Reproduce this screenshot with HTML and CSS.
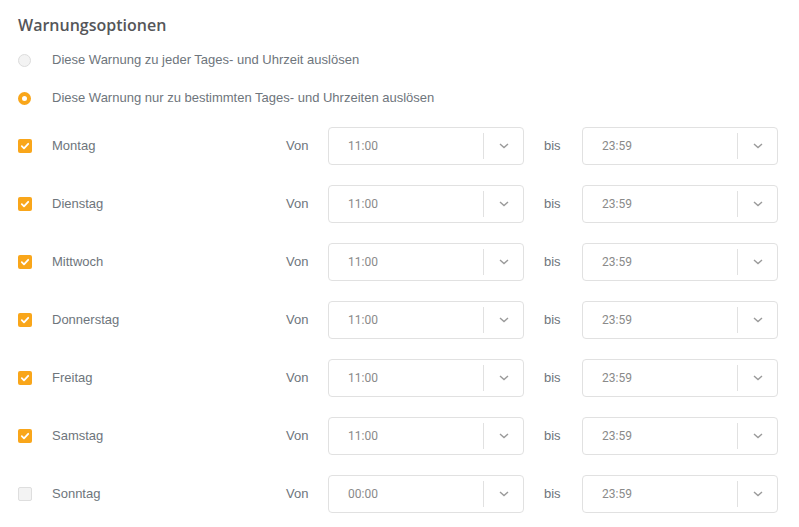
FILE: index.html
```html
<!DOCTYPE html>
<html lang="de">
<head>
<meta charset="utf-8">
<title>Warnungsoptionen</title>
<link rel="stylesheet" href="styles.css">
</head>
<body>
<div class="panel">
  <h2 class="title">Warnungsoptionen</h2>
  <div class="radio-row">
    <span class="radio"></span>
    <span class="label">Diese Warnung zu jeder Tages- und Uhrzeit auslösen</span>
  </div>
  <div class="radio-row">
    <span class="radio checked"></span>
    <span class="label">Diese Warnung nur zu bestimmten Tages- und Uhrzeiten auslösen</span>
  </div>
  <div class="days">
    <div class="day">
      <span class="check checked"><svg viewBox="0 0 14 14" width="14" height="14"><path d="M3.8 7.2 L6 9.3 L10.2 4.8" fill="none" stroke="#fff" stroke-width="1.8" stroke-linecap="round" stroke-linejoin="round"/></svg></span>
      <span class="label">Montag</span>
      <span class="label">Von</span>
      <div class="select"><span class="val">11:00</span><span class="arrow"><svg viewBox="0 0 10 6" width="10" height="6"><path d="M1 1 L5 4.6 L9 1" fill="none" stroke="#9a9a9a" stroke-width="1.4"/></svg></span></div>
      <span class="label bis">bis</span>
      <div class="select"><span class="val">23:59</span><span class="arrow"><svg viewBox="0 0 10 6" width="10" height="6"><path d="M1 1 L5 4.6 L9 1" fill="none" stroke="#9a9a9a" stroke-width="1.4"/></svg></span></div>
    </div>
    <div class="day">
      <span class="check checked"><svg viewBox="0 0 14 14" width="14" height="14"><path d="M3.8 7.2 L6 9.3 L10.2 4.8" fill="none" stroke="#fff" stroke-width="1.8" stroke-linecap="round" stroke-linejoin="round"/></svg></span>
      <span class="label">Dienstag</span>
      <span class="label">Von</span>
      <div class="select"><span class="val">11:00</span><span class="arrow"><svg viewBox="0 0 10 6" width="10" height="6"><path d="M1 1 L5 4.6 L9 1" fill="none" stroke="#9a9a9a" stroke-width="1.4"/></svg></span></div>
      <span class="label bis">bis</span>
      <div class="select"><span class="val">23:59</span><span class="arrow"><svg viewBox="0 0 10 6" width="10" height="6"><path d="M1 1 L5 4.6 L9 1" fill="none" stroke="#9a9a9a" stroke-width="1.4"/></svg></span></div>
    </div>
    <div class="day">
      <span class="check checked"><svg viewBox="0 0 14 14" width="14" height="14"><path d="M3.8 7.2 L6 9.3 L10.2 4.8" fill="none" stroke="#fff" stroke-width="1.8" stroke-linecap="round" stroke-linejoin="round"/></svg></span>
      <span class="label">Mittwoch</span>
      <span class="label">Von</span>
      <div class="select"><span class="val">11:00</span><span class="arrow"><svg viewBox="0 0 10 6" width="10" height="6"><path d="M1 1 L5 4.6 L9 1" fill="none" stroke="#9a9a9a" stroke-width="1.4"/></svg></span></div>
      <span class="label bis">bis</span>
      <div class="select"><span class="val">23:59</span><span class="arrow"><svg viewBox="0 0 10 6" width="10" height="6"><path d="M1 1 L5 4.6 L9 1" fill="none" stroke="#9a9a9a" stroke-width="1.4"/></svg></span></div>
    </div>
    <div class="day">
      <span class="check checked"><svg viewBox="0 0 14 14" width="14" height="14"><path d="M3.8 7.2 L6 9.3 L10.2 4.8" fill="none" stroke="#fff" stroke-width="1.8" stroke-linecap="round" stroke-linejoin="round"/></svg></span>
      <span class="label">Donnerstag</span>
      <span class="label">Von</span>
      <div class="select"><span class="val">11:00</span><span class="arrow"><svg viewBox="0 0 10 6" width="10" height="6"><path d="M1 1 L5 4.6 L9 1" fill="none" stroke="#9a9a9a" stroke-width="1.4"/></svg></span></div>
      <span class="label bis">bis</span>
      <div class="select"><span class="val">23:59</span><span class="arrow"><svg viewBox="0 0 10 6" width="10" height="6"><path d="M1 1 L5 4.6 L9 1" fill="none" stroke="#9a9a9a" stroke-width="1.4"/></svg></span></div>
    </div>
    <div class="day">
      <span class="check checked"><svg viewBox="0 0 14 14" width="14" height="14"><path d="M3.8 7.2 L6 9.3 L10.2 4.8" fill="none" stroke="#fff" stroke-width="1.8" stroke-linecap="round" stroke-linejoin="round"/></svg></span>
      <span class="label">Freitag</span>
      <span class="label">Von</span>
      <div class="select"><span class="val">11:00</span><span class="arrow"><svg viewBox="0 0 10 6" width="10" height="6"><path d="M1 1 L5 4.6 L9 1" fill="none" stroke="#9a9a9a" stroke-width="1.4"/></svg></span></div>
      <span class="label bis">bis</span>
      <div class="select"><span class="val">23:59</span><span class="arrow"><svg viewBox="0 0 10 6" width="10" height="6"><path d="M1 1 L5 4.6 L9 1" fill="none" stroke="#9a9a9a" stroke-width="1.4"/></svg></span></div>
    </div>
    <div class="day">
      <span class="check checked"><svg viewBox="0 0 14 14" width="14" height="14"><path d="M3.8 7.2 L6 9.3 L10.2 4.8" fill="none" stroke="#fff" stroke-width="1.8" stroke-linecap="round" stroke-linejoin="round"/></svg></span>
      <span class="label">Samstag</span>
      <span class="label">Von</span>
      <div class="select"><span class="val">11:00</span><span class="arrow"><svg viewBox="0 0 10 6" width="10" height="6"><path d="M1 1 L5 4.6 L9 1" fill="none" stroke="#9a9a9a" stroke-width="1.4"/></svg></span></div>
      <span class="label bis">bis</span>
      <div class="select"><span class="val">23:59</span><span class="arrow"><svg viewBox="0 0 10 6" width="10" height="6"><path d="M1 1 L5 4.6 L9 1" fill="none" stroke="#9a9a9a" stroke-width="1.4"/></svg></span></div>
    </div>
    <div class="day">
      <span class="check"></span>
      <span class="label">Sonntag</span>
      <span class="label">Von</span>
      <div class="select"><span class="val">00:00</span><span class="arrow"><svg viewBox="0 0 10 6" width="10" height="6"><path d="M1 1 L5 4.6 L9 1" fill="none" stroke="#9a9a9a" stroke-width="1.4"/></svg></span></div>
      <span class="label bis">bis</span>
      <div class="select"><span class="val">23:59</span><span class="arrow"><svg viewBox="0 0 10 6" width="10" height="6"><path d="M1 1 L5 4.6 L9 1" fill="none" stroke="#9a9a9a" stroke-width="1.4"/></svg></span></div>
    </div>
  </div>
</div>
</body>
</html>
```

FILE: styles.css
```css
html, body {
  margin: 0;
  padding: 0;
  background: #ffffff;
}

body {
  font-family: "Liberation Sans", Arial, sans-serif;
  color: #6e757c;
  font-size: 13px;
}

.panel {
  padding: 13px 21px 0 18px;
}

.title {
  margin: 0 0 4px 0;
  font-family: "Open Sans", sans-serif;
  font-weight: 600;
  font-size: 16px;
  line-height: 24px;
  color: #555659;
}

.radio-row {
  display: flex;
  align-items: center;
  height: 38px;
}

.radio {
  width: 13px;
  height: 13px;
  box-sizing: border-box;
  border-radius: 50%;
  border: 1px solid #dcdcdc;
  background: #f3f3f3;
  margin-right: 21px;
  flex: none;
}

.radio.checked {
  border: 4px solid #f9a61a;
  background: #ffffff;
}

.label {
  line-height: 16px;
}

.days {
  margin-top: 10px;
  display: grid;
  row-gap: 20px;
}

.day {
  display: grid;
  grid-template-columns: 34px 234px 42px 196px 58px 196px;
  align-items: center;
  height: 38px;
}

.check {
  width: 14px;
  height: 14px;
  box-sizing: border-box;
  border-radius: 2px;
  border: 1px solid #dedede;
  background: #f3f3f3;
  display: flex;
}

.check.checked {
  border: none;
  background: #f9a61a;
}

.bis {
  padding-left: 20px;
}

.select {
  box-sizing: border-box;
  height: 38px;
  border: 1px solid #e1e1e1;
  border-radius: 4px;
  display: flex;
  align-items: center;
  background: #ffffff;
}

.val {
  flex: 1;
  padding-left: 19px;
  font-family: Roboto, "Liberation Sans", sans-serif;
  font-size: 12px;
  color: #8a8a8a;
}

.arrow {
  width: 39px;
  height: 26px;
  border-left: 1px solid #e1e1e1;
  display: flex;
  align-items: center;
  justify-content: center;
}

.arrow svg {
  display: block;
}
```
